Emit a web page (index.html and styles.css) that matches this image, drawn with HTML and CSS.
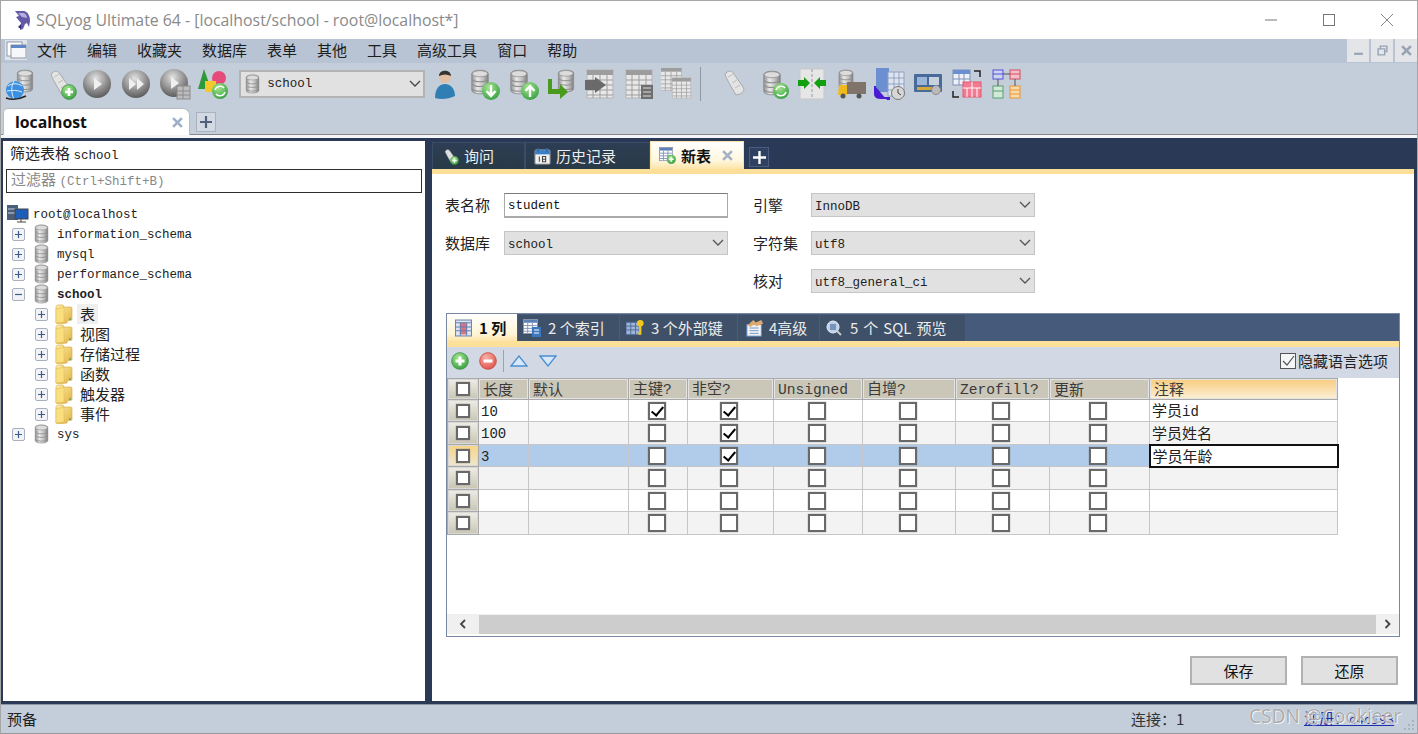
FILE: index.html
```html
<!DOCTYPE html>
<html lang="zh">
<head>
<meta charset="utf-8">
<title>SQLyog</title>
<link rel="stylesheet" href="styles.css">
</head>
<body>
<svg class="defs" aria-hidden="true">
  <defs>
    <linearGradient id="gcyl" x1="0" x2="1" y1="0" y2="0"><stop offset="0" stop-color="#8f8f8f"/><stop offset=".35" stop-color="#e9e9e9"/><stop offset=".7" stop-color="#bdbdbd"/><stop offset="1" stop-color="#7d7d7d"/></linearGradient>
    <radialGradient id="gball" cx=".45" cy=".3" r=".8"><stop offset="0" stop-color="#e2e2e2"/><stop offset=".55" stop-color="#8c8c8c"/><stop offset="1" stop-color="#4a4a4a"/></radialGradient>
    <linearGradient id="gfold" x1="0" x2="1" y1="0" y2="1"><stop offset="0" stop-color="#fbeea8"/><stop offset="1" stop-color="#e2b23f"/></linearGradient>
    <radialGradient id="ggreen" cx=".4" cy=".3" r=".8"><stop offset="0" stop-color="#a5e58f"/><stop offset="1" stop-color="#2e9a3a"/></radialGradient>
    <radialGradient id="gred" cx=".4" cy=".3" r=".8"><stop offset="0" stop-color="#f9b2a8"/><stop offset="1" stop-color="#dd4a42"/></radialGradient>
    <symbol id="db" viewBox="0 0 16 22"><path d="M1 4c0-4 14-4 14 0v14c0 4-14 4-14 0z" fill="url(#gcyl)" stroke="#8a8a8a" stroke-width=".7"/><ellipse cx="8" cy="4" rx="6.5" ry="2.6" fill="#dcdcdc" stroke="#8a8a8a" stroke-width=".6"/><path d="M1.5 9c2 2.4 11 2.4 13 0M1.5 13c2 2.4 11 2.4 13 0M1.5 17c2 2.4 11 2.4 13 0" fill="none" stroke="#8d8d8d" stroke-width=".9"/></symbol>
    <symbol id="gplus" viewBox="0 0 14 14"><circle cx="7" cy="7" r="6.5" fill="url(#ggreen)" stroke="#3c8f44" stroke-width=".6"/><path d="M7 3.5v7M3.5 7h7" stroke="#fff" stroke-width="2.4"/></symbol>
    <symbol id="scroll" viewBox="0 0 32 32"><path d="M7 5c3-3 6-2 8 1l9 13c2 3 0 6-3 7l-4 1c-2-4-5-8-7-12L7 9c-1-1-1-3 0-4z" fill="#e4e4e4" stroke="#a9a9a9"/><path d="M9 9c2-1 4-2 5-3M13 15l5-3M16 20l5-3" stroke="#bdbdbd" fill="none"/></symbol>
    <symbol id="tablegray" viewBox="0 0 32 32"><rect x="3" y="2" width="26" height="28" fill="#e8e8e8" stroke="#b5b5b5"/><rect x="3" y="2" width="26" height="5" fill="#9d9d9d"/><path d="M3 12h26M3 17h26M3 22h26M3 27h26M9 7v23M16 7v23M23 7v23" stroke="#9d9d9d"/></symbol>
    <symbol id="sqgrid" viewBox="0 0 16 16"><rect x=".5" y=".5" width="15" height="15" fill="#fff" stroke="#8b96a8"/><rect x="1" y="1" width="14" height="3" fill="#5f7fb8"/><path d="M1 7h14M1 10h14M1 13h14M5 4v11M10 4v11" stroke="#7f93b3"/></symbol>
    <symbol id="fold" viewBox="0 0 18 20"><path d="M1 3c0-1 1-2 2-2h5l1 2h7c1 0 1 1 1 2v11l-5 1v2l-9 1-2-1z" fill="url(#gfold)" stroke="#d1a93f" stroke-width=".6"/><path d="M1 5l8-2v15l-8 1z" fill="#fadf7f" stroke="#dcb54f" stroke-width=".5"/><rect x="14" y="14" width="2" height="2" fill="#7faa6a"/></symbol>
    <symbol id="p" viewBox="0 0 13 13"><rect x=".5" y=".5" width="12" height="12" rx="1.5" fill="#f1f3f7" stroke="#a9b0bd"/><path d="M3 6.5h7M6.5 3v7" stroke="#3f5b8c" stroke-width="1.2"/></symbol>
    <symbol id="mn" viewBox="0 0 13 13"><rect x=".5" y=".5" width="12" height="12" rx="1.5" fill="#f1f3f7" stroke="#a9b0bd"/><path d="M3 6.5h7" stroke="#3f5b8c" stroke-width="1.2"/></symbol>
  </defs>
</svg>

<div class="window">
  <header class="titlebar">
    <svg class="logo" viewBox="0 0 18 20"><path d="M2 1l9 0c4 1 6 5 6 10l-1 6-2-4-2 1-2 5-3 1 1-7-5-6 3-1z" fill="#6459a6"/><path d="M5 3h6c2 1 3 3 3 5l-5-1z" fill="#b3aee0"/><path d="M5 17l3-3 0 5z" fill="#2d2a78"/></svg>
    <span class="title">SQLyog Ultimate 64 - [localhost/school - root@localhost*]</span>
    <div class="winbtns">
      <svg viewBox="0 0 12 12"><path d="M0 6h12" stroke="#777"/></svg>
      <svg viewBox="0 0 12 12"><rect x=".5" y=".5" width="11" height="11" fill="none" stroke="#777"/></svg>
      <svg viewBox="0 0 12 12"><path d="M0 0l12 12M12 0L0 12" stroke="#777" stroke-width=".9"/></svg>
    </div>
  </header>

  <nav class="menubar">
    <svg class="mdi" viewBox="0 0 22 20"><rect x="0" y="0" width="22" height="20" fill="#dfe3ea"/><rect x="2" y="2" width="15" height="14" fill="#fff" stroke="#8d97a8"/><rect x="6" y="5" width="15" height="13" fill="#f6f7f9" stroke="#8d97a8"/><path d="M6 5h15v3H6z" fill="#5f86c5"/></svg>
    <span class="mi">文件</span><span class="mi">编辑</span><span class="mi">收藏夹</span><span class="mi">数据库</span><span class="mi">表单</span><span class="mi">其他</span><span class="mi">工具</span><span class="mi">高级工具</span><span class="mi">窗口</span><span class="mi">帮助</span>
    <div class="mdibtns">
      <span class="mdib"><svg viewBox="0 0 10 10"><path d="M1 8h8" stroke="#98a3b3" stroke-width="2"/></svg></span>
      <span class="mdib"><svg viewBox="0 0 10 10"><path d="M3 3V1h6v5H7M1 3.5h6V9H1z" fill="none" stroke="#98a3b3" stroke-width="1.3"/></svg></span>
      <span class="mdib"><svg viewBox="0 0 10 10"><path d="M1 1l8 8M9 1l-8 8" stroke="#98a3b3" stroke-width="2.4"/></svg></span>
    </div>
  </nav>

  <div class="toolbar">
    <svg class="ti" viewBox="0 0 32 32"><use href="#db" x="12" y="1" width="18" height="24"/><circle cx="11" cy="22" r="9" fill="#3c8fe0"/><path d="M4 18c4-3 10-3 14 0M3 23c5-1 10-1 15 1M10 13c-3 5-3 12 0 18" stroke="#dff0ff" fill="none"/><path d="M2 30c6 2 14 1 20-2" stroke="#222" stroke-width="1.4" fill="none"/></svg>
    <svg class="ti ti-second" viewBox="0 0 32 32"><use href="#scroll"/><use href="#gplus" x="16" y="16" width="16" height="16"/></svg>
    <svg class="ti" viewBox="0 0 32 32"><circle cx="16" cy="16" r="14" fill="url(#gball)"/><path d="M13 10l8 6-8 6z" fill="#f0f0f0"/></svg>
    <svg class="ti" viewBox="0 0 32 32"><circle cx="16" cy="16" r="14" fill="url(#gball)"/><path d="M9 10l7 6-7 6zM17 10l7 6-7 6z" fill="#f0f0f0"/></svg>
    <svg class="ti" viewBox="0 0 32 32"><circle cx="15" cy="15" r="14" fill="url(#gball)"/><path d="M12 9l8 6-8 6z" fill="#f0f0f0"/><rect x="18" y="18" width="13" height="13" fill="#bdbdbd" stroke="#8a8a8a"/><path d="M18 23h13M18 27h13M24 18v13" stroke="#8a8a8a"/></svg>
    <svg class="ti" viewBox="0 0 32 32"><path d="M7 1l7 20H1z" fill="#2e9a3a"/><circle cx="22" cy="10" r="7" fill="#e64a7a"/><rect x="8" y="13" width="11" height="11" fill="#f4c82d"/><circle cx="23" cy="23" r="8" fill="url(#ggreen)"/><path d="M18 22c1-4 7-5 9-2M28 24c-1 4-7 5-9 2" stroke="#fff" stroke-width="1.5" fill="none"/></svg>
    <div class="combo combo-db"><svg class="cdb" viewBox="0 0 16 22"><use href="#db"/></svg><span class="m">school</span><svg class="chev" viewBox="0 0 12 8"><path d="M1 1l5 5 5-5" fill="none" stroke="#444" stroke-width="1.3"/></svg></div>
    <svg class="ti" viewBox="0 0 32 32"><circle cx="16" cy="9" r="6" fill="#e2bfa2"/><path d="M10 8c0-7 12-7 12 0-4-2-8-2-12 0z" fill="#333"/><path d="M6 30c0-10 5-14 10-14s10 4 10 12c-6 3-14 4-20 2z" fill="#2f7fb5"/></svg>
    <svg class="ti" viewBox="0 0 32 32"><use href="#db" x="2" y="1" width="20" height="26"/><circle cx="23" cy="23" r="9" fill="url(#ggreen)"/><path d="M23 17v10M18.5 23l4.5 5 4.5-5" stroke="#fff" stroke-width="2.4" fill="none"/></svg>
    <svg class="ti" viewBox="0 0 32 32"><use href="#db" x="2" y="1" width="20" height="26"/><circle cx="23" cy="23" r="9" fill="url(#ggreen)"/><path d="M23 29V19M18.5 23l4.5-5 4.5 5" stroke="#fff" stroke-width="2.4" fill="none"/></svg>
    <svg class="ti" viewBox="0 0 32 32"><use href="#db" x="12" y="1" width="18" height="24"/><path d="M3 11h4v10h8v-5l8 8-8 7v-5H3z" fill="#4a9a1e"/></svg>
    <svg class="ti" viewBox="0 0 32 32"><use href="#tablegray"/><path d="M1 12h10v-3l11 8-11 8v-3H1z" fill="#6a6a6a"/></svg>
    <svg class="ti" viewBox="0 0 32 32"><use href="#tablegray"/><rect x="18" y="17" width="12" height="14" fill="#6e6e6e"/><path d="M20 20h8M20 24h8M20 28h8" stroke="#ddd"/></svg>
    <svg class="ti" viewBox="0 0 32 32"><use href="#tablegray" x="-3" y="-2" width="26" height="26"/><use href="#tablegray" x="9" y="8" width="23" height="24"/></svg>
    <span class="tsep"></span>
    <svg class="ti" viewBox="0 0 32 32"><use href="#scroll"/></svg>
    <svg class="ti" viewBox="0 0 32 32"><use href="#db" x="4" y="2" width="20" height="26"/><circle cx="23" cy="23" r="8" fill="url(#ggreen)"/><path d="M18 22c1-4 7-5 9-2M28 24c-1 4-7 5-9 2" stroke="#fff" stroke-width="1.5" fill="none"/></svg>
    <svg class="ti" viewBox="0 0 32 32"><rect x="4" y="1" width="24" height="30" fill="#e6e6e6" stroke="#c7c7c7"/><path d="M16 1v30" stroke="#999" stroke-dasharray="3 2"/><path d="M2 12h6V9l6 6-6 6v-3H2zM30 12h-6V9l-6 6 6 6v-3h6z" fill="#12a012"/></svg>
    <svg class="ti" viewBox="0 0 32 32"><use href="#db" x="2" y="1" width="18" height="22"/><rect x="12" y="14" width="19" height="12" fill="#80736a"/><path d="M4 17h8v10H3z" fill="#f0b91e"/><circle cx="8" cy="28" r="2.5" fill="#555"/><circle cx="24" cy="28" r="2.5" fill="#555"/></svg>
    <svg class="ti" viewBox="0 0 32 32"><rect x="2" y="0" width="13" height="24" fill="#6b8fd0"/><rect x="14" y="4" width="16" height="24" fill="#dfe5ef" stroke="#8fa3c4"/><path d="M14 10h16M14 16h16M14 22h16M20 4v24M25 4v24" stroke="#8fa3c4"/><path d="M1 18v8c0 3 3 4 6 4h8v3l-2-1" fill="#4a1cd2" stroke="#4a1cd2" stroke-width="2"/><circle cx="24" cy="25" r="6.5" fill="#d6d6d6" stroke="#777"/><path d="M24 21v4l3 2" stroke="#444" fill="none"/></svg>
    <svg class="ti" viewBox="0 0 32 32"><rect x="2" y="6" width="28" height="18" rx="1" fill="#4a6a9a"/><rect x="5" y="9" width="10" height="8" fill="#9ab6d8"/><rect x="17" y="9" width="10" height="8" fill="#c7d2de"/><rect x="5" y="19" width="18" height="3" fill="#d3a83c"/><circle cx="24" cy="22" r="4.5" fill="#bbb" stroke="#888"/></svg>
    <svg class="ti" viewBox="0 0 32 32"><rect x="2" y="2" width="17" height="15" fill="#eef2f8" stroke="#7b93b8"/><rect x="2" y="2" width="17" height="4" fill="#6b8fd0"/><path d="M8 6v11M13 6v11M2 11h17" stroke="#7b93b8"/><rect x="12" y="14" width="18" height="15" fill="#f37a90" stroke="#e5566f"/><path d="M21 14v15M12 20h18M16 20v9M26 20v9" stroke="#fff"/><path d="M23 3h6v6M2 23v6h6" fill="none" stroke="#222" stroke-width="1.5"/></svg>
    <svg class="ti" viewBox="0 0 32 32"><rect x="3" y="2" width="10" height="9" fill="#cfd4f0" stroke="#5050d8"/><path d="M3 6h10" stroke="#5050d8"/><rect x="20" y="2" width="10" height="9" fill="#f3c0c8" stroke="#d84a60"/><path d="M20 6h10" stroke="#d84a60"/><rect x="3" y="18" width="10" height="12" fill="#d3e8d6" stroke="#54a06a"/><path d="M3 23h10" stroke="#54a06a"/><rect x="20" y="18" width="10" height="12" fill="#f8d9ac" stroke="#e8952e"/><path d="M20 22h10M20 26h10" stroke="#e8952e"/><path d="M13 6h7M8 11v7M25 11v7" stroke="#555"/></svg>
  </div>

  <div class="conntabs">
    <div class="conntab"><span class="conn-name">localhost</span><svg class="x" viewBox="0 0 10 10"><path d="M1 1l8 8M9 1l-8 8" stroke="#9fb0c8" stroke-width="2.4"/></svg></div>
    <div class="connplus"><svg viewBox="0 0 12 12"><path d="M6 0v12M0 6h12" stroke="#51617b" stroke-width="2.2"/></svg></div>
  </div>
  <div class="gapline"></div>

  <main class="main">
    <aside class="left">
      <div class="flt-label">筛选表格 <span class="m">school</span></div>
      <div class="flt-input">过滤器 <span class="m">(Ctrl+Shift+B)</span></div>
      <ul class="tree">
        <li class="row r0"><svg class="srv" viewBox="0 0 22 18"><rect x="0" y="0" width="11" height="15" fill="#4b5f7b"/><path d="M1 4h9M1 8h9" stroke="#cbd4e0"/><rect x="8" y="4" width="13" height="10" fill="#1d5fb8" stroke="#444"/><path d="M14 14v3M10 17h9" stroke="#444"/></svg><span class="m">root@localhost</span></li>
        <li class="row"><span class="pm"><svg viewBox="0 0 13 13"><use href="#p"/></svg></span><svg class="dbi" viewBox="0 0 16 22"><use href="#db"/></svg><span class="m">information_schema</span></li>
        <li class="row"><span class="pm"><svg viewBox="0 0 13 13"><use href="#p"/></svg></span><svg class="dbi" viewBox="0 0 16 22"><use href="#db"/></svg><span class="m">mysql</span></li>
        <li class="row"><span class="pm"><svg viewBox="0 0 13 13"><use href="#p"/></svg></span><svg class="dbi" viewBox="0 0 16 22"><use href="#db"/></svg><span class="m">performance_schema</span></li>
        <li class="row"><span class="pm"><svg viewBox="0 0 13 13"><use href="#mn"/></svg></span><svg class="dbi" viewBox="0 0 16 22"><use href="#db"/></svg><span class="m b">school</span></li>
        <li class="row sub"><span class="pm"><svg viewBox="0 0 13 13"><use href="#p"/></svg></span><svg class="fo" viewBox="0 0 18 20"><use href="#fold"/></svg><span class="hl">表</span></li>
        <li class="row sub"><span class="pm"><svg viewBox="0 0 13 13"><use href="#p"/></svg></span><svg class="fo" viewBox="0 0 18 20"><use href="#fold"/></svg><span class="cj">视图</span></li>
        <li class="row sub"><span class="pm"><svg viewBox="0 0 13 13"><use href="#p"/></svg></span><svg class="fo" viewBox="0 0 18 20"><use href="#fold"/></svg><span class="cj">存储过程</span></li>
        <li class="row sub"><span class="pm"><svg viewBox="0 0 13 13"><use href="#p"/></svg></span><svg class="fo" viewBox="0 0 18 20"><use href="#fold"/></svg><span class="cj">函数</span></li>
        <li class="row sub"><span class="pm"><svg viewBox="0 0 13 13"><use href="#p"/></svg></span><svg class="fo" viewBox="0 0 18 20"><use href="#fold"/></svg><span class="cj">触发器</span></li>
        <li class="row sub"><span class="pm"><svg viewBox="0 0 13 13"><use href="#p"/></svg></span><svg class="fo" viewBox="0 0 18 20"><use href="#fold"/></svg><span class="cj">事件</span></li>
        <li class="row"><span class="pm"><svg viewBox="0 0 13 13"><use href="#p"/></svg></span><svg class="dbi" viewBox="0 0 16 22"><use href="#db"/></svg><span class="m">sys</span></li>
      </ul>
    </aside>

    <section class="right">
      <div class="qtabs">
        <div class="qtab q1"><svg class="qi" viewBox="0 0 32 32"><use href="#scroll"/><use href="#gplus" x="15" y="15" width="17" height="17"/></svg><span>询问</span></div>
        <div class="qtab q2"><svg class="qi" viewBox="0 0 16 16"><rect x="1" y="2" width="14" height="13" rx="1" fill="#f2f2f2" stroke="#aaa"/><rect x="1" y="2" width="14" height="4" fill="#3a7fc8"/><path d="M4 0v4M12 0v4" stroke="#2e6aa8" stroke-width="1.5"/><path d="M5 8v5M8 8h3v5H8zM8 10.5h3" stroke="#444" fill="none"/></svg><span>历史记录</span></div>
        <div class="qtab active"><svg class="qi" viewBox="0 0 18 18"><use href="#sqgrid" width="15" height="15"/><use href="#gplus" x="8" y="8" width="10" height="10"/></svg><b>新表</b><svg class="x qx" viewBox="0 0 10 10"><path d="M1 1l8 8M9 1l-8 8" stroke="#a5b1c6" stroke-width="2.4"/></svg></div>
        <div class="qplus"><svg viewBox="0 0 12 12"><path d="M6 0v12M0 6h12" stroke="#fff" stroke-width="2.2"/></svg></div>
      </div>
      <div class="yline"></div>
      <div class="body">
        <div class="form">
          <label>表名称</label><div class="inp m">student</div><span></span><label>引擎</label><div class="combo sel"><span class="m">InnoDB</span><svg class="chev" viewBox="0 0 12 8"><path d="M1 1l5 5 5-5" fill="none" stroke="#555" stroke-width="1.3"/></svg></div>
          <label>数据库</label><div class="combo sel"><span class="m">school</span><svg class="chev" viewBox="0 0 12 8"><path d="M1 1l5 5 5-5" fill="none" stroke="#555" stroke-width="1.3"/></svg></div><span></span><label>字符集</label><div class="combo sel"><span class="m">utf8</span><svg class="chev" viewBox="0 0 12 8"><path d="M1 1l5 5 5-5" fill="none" stroke="#555" stroke-width="1.3"/></svg></div>
          <span></span><span></span><span></span><label>核对</label><div class="combo sel"><span class="m">utf8_general_ci</span><svg class="chev" viewBox="0 0 12 8"><path d="M1 1l5 5 5-5" fill="none" stroke="#555" stroke-width="1.3"/></svg></div>
        </div>

        <div class="inner">
          <div class="stabs">
            <div class="stab active s1"><svg class="si" viewBox="0 0 16 16"><rect x=".5" y=".5" width="15" height="15" fill="#dfe6f2" stroke="#6f87ad"/><rect x="5" y="3" width="6" height="11" fill="#e0707a"/><path d="M1 3h14M1 7h14M1 10.5h14M5 3v12M11 3v12" stroke="#5f7faf"/></svg><b>1 列</b></div>
            <div class="stab s2"><svg class="si" viewBox="0 0 18 18"><use href="#sqgrid" width="15" height="15"/><rect x="9" y="8" width="9" height="10" fill="#3c78c0"/><path d="M11 11h5M11 14h5" stroke="#fff"/></svg><span>2 个索引</span></div>
            <div class="stab s3"><svg class="si" viewBox="0 0 20 18"><rect x="0" y="3" width="14" height="13" fill="#9fb4d6" stroke="#4f6b98"/><path d="M0 7h14M0 11h14M5 3v13M10 3v13" stroke="#4f6b98"/><circle cx="15" cy="4" r="3.5" fill="#f2c81e"/><path d="M15 6v9l-2 0" stroke="#f2c81e" stroke-width="2.4" fill="none"/></svg><span>3 个外部键</span></div>
            <div class="stab s4"><svg class="si" viewBox="0 0 20 20"><rect x="1" y="6" width="16" height="13" fill="#f2f2f2" stroke="#5e8fca"/><path d="M4 10h10M4 13h10M4 16h10" stroke="#5e8fca"/><path d="M2 7l6-6 3 3 6-3 2 4-7 3-3-2-4 3z" fill="#e0a96d"/></svg><span>4高级</span></div>
            <div class="stab s5"><svg class="si" viewBox="0 0 16 16"><circle cx="7" cy="7" r="6" fill="#bcd2ec" stroke="#e6edf6"/><path d="M4 5h6M4 7h6M4 9h6" stroke="#34568a"/><path d="M11 11l4 4" stroke="#c8c8c8" stroke-width="2"/></svg><span>5 个 SQL 预览</span></div>
          </div>
          <div class="yline2"></div>
          <div class="subbar">
            <svg class="sb" viewBox="0 0 14 14"><use href="#gplus"/></svg>
            <svg class="sb sb2" viewBox="0 0 14 14"><circle cx="7" cy="7" r="6.5" fill="url(#gred)" stroke="#c9453d" stroke-width=".6"/><path d="M3.5 7h7" stroke="#fff" stroke-width="2.4"/></svg>
            <span class="sbsep"></span>
            <svg class="tri" viewBox="0 0 18 12"><path d="M1 11L9 1l8 10z" fill="#d8e8f8" stroke="#4a8fd0" stroke-width="1.3"/></svg>
            <svg class="tri tri2" viewBox="0 0 18 12"><path d="M1 1l8 10 8-10z" fill="#d8e8f8" stroke="#4a8fd0" stroke-width="1.3"/></svg>
            <div class="hide"><span class="hcb"><svg viewBox="0 0 14 14"><path d="M2 7l4 4 7-9" fill="none" stroke="#555" stroke-width="1.2"/></svg></span>隐藏语言选项</div>
          </div>
          <div class="gridwrap">
            <table class="grid">
              <colgroup><col class="c0"><col class="c1"><col class="c2"><col class="c3"><col class="c4"><col class="c5"><col class="c6"><col class="c7"><col class="c8"><col class="c9"></colgroup>
              <thead><tr>
                <th class="rh"><i class="cb"></i></th><th>长度</th><th>默认</th><th>主键<span class="m">?</span></th><th>非空<span class="m">?</span></th><th><span class="m">Unsigned</span></th><th>自增<span class="m">?</span></th><th><span class="m">Zerofill?</span></th><th>更新</th><th class="sorted">注释</th>
              </tr></thead>
              <tbody>
                <tr><td class="rh"><i class="cb"></i></td><td class="txt"><span class="m">10</span></td><td></td><td class="ck"><i class="cb on"></i></td><td class="ck"><i class="cb on"></i></td><td class="ck"><i class="cb"></i></td><td class="ck"><i class="cb"></i></td><td class="ck"><i class="cb"></i></td><td class="ck"><i class="cb"></i></td><td class="txt">学员<span class="m">id</span></td></tr>
                <tr><td class="rh"><i class="cb"></i></td><td class="txt"><span class="m">100</span></td><td></td><td class="ck"><i class="cb"></i></td><td class="ck"><i class="cb on"></i></td><td class="ck"><i class="cb"></i></td><td class="ck"><i class="cb"></i></td><td class="ck"><i class="cb"></i></td><td class="ck"><i class="cb"></i></td><td class="txt">学员姓名</td></tr>
                <tr class="selrow"><td class="rh"><i class="cb"></i></td><td class="txt"><span class="m">3</span></td><td></td><td class="ck"><i class="cb"></i></td><td class="ck"><i class="cb on"></i></td><td class="ck"><i class="cb"></i></td><td class="ck"><i class="cb"></i></td><td class="ck"><i class="cb"></i></td><td class="ck"><i class="cb"></i></td><td class="txt focus">学员年龄</td></tr>
                <tr><td class="rh"><i class="cb"></i></td><td></td><td></td><td class="ck"><i class="cb"></i></td><td class="ck"><i class="cb"></i></td><td class="ck"><i class="cb"></i></td><td class="ck"><i class="cb"></i></td><td class="ck"><i class="cb"></i></td><td class="ck"><i class="cb"></i></td><td></td></tr>
                <tr><td class="rh"><i class="cb"></i></td><td></td><td></td><td class="ck"><i class="cb"></i></td><td class="ck"><i class="cb"></i></td><td class="ck"><i class="cb"></i></td><td class="ck"><i class="cb"></i></td><td class="ck"><i class="cb"></i></td><td class="ck"><i class="cb"></i></td><td></td></tr>
                <tr><td class="rh"><i class="cb"></i></td><td></td><td></td><td class="ck"><i class="cb"></i></td><td class="ck"><i class="cb"></i></td><td class="ck"><i class="cb"></i></td><td class="ck"><i class="cb"></i></td><td class="ck"><i class="cb"></i></td><td class="ck"><i class="cb"></i></td><td></td></tr>
              </tbody>
            </table>
          </div>
          <div class="hscroll">
            <svg class="arr" viewBox="0 0 8 10"><path d="M6 1L2 5l4 4" fill="none" stroke="#444" stroke-width="1.8"/></svg>
            <div class="thumb"></div>
            <svg class="arr" viewBox="0 0 8 10"><path d="M2 1l4 4-4 4" fill="none" stroke="#444" stroke-width="1.8"/></svg>
          </div>
        </div>

        <div class="actions"><button class="btn">保存</button><button class="btn">还原</button></div>
      </div>
    </section>
  </main>

  <footer class="status">
    <span class="st-ready">预备</span>
    <span class="st-conn">连接：1</span>
    <span class="st-link">注册：<span class="m">c4c193</span></span>
    <svg class="grip" viewBox="0 0 12 12"><path d="M9 1h2v2H9zM5 5h2v2H5zM9 5h2v2H9zM1 9h2v2H1zM5 9h2v2H5zM9 9h2v2H9z" fill="#a8b2c0"/></svg>
    <span class="wm">CSDN @Cookieer</span>
  </footer>
</div>
</body>
</html>
```
FILE: styles.css
```css
* { box-sizing: border-box; }
html, body { margin: 0; padding: 0; height: 100%; overflow: hidden; }
body { font: 15px/20px "Noto Sans CJK SC", "Noto Sans", sans-serif; color: #222; background: #fff; }
.defs { display: block; width: 0; height: 0; overflow: hidden; }
.m { font-family: "Liberation Mono", "Noto Sans CJK SC", monospace; font-size: 12.5px; }
.b { font-weight: 700; }

.window { height: 734px; display: flex; flex-direction: column; border: 1px solid #a6a6a6; border-bottom-color: #9a9a9a; position: relative; }

.titlebar { height: 38px; flex: none; display: flex; align-items: center; background: #fff; padding-left: 12px; }
.logo { width: 18px; height: 20px; }
.title { margin-left: 5px; font: 15.85px/20px "Open Sans", sans-serif; color: #8a8a8a; white-space: nowrap; }
.winbtns { margin-left: auto; display: flex; gap: 46px; padding-right: 24px; }
.winbtns svg { width: 12px; height: 12px; display: block; }

.menubar { height: 24px; flex: none; display: flex; align-items: center; background: #b8c4d4; padding: 0 0 2px 4px; }
.mdi { width: 22px; height: 20px; }
.mi { padding: 0 10px; color: #1d1d1d; }
.mdibtns { margin: 0 0 -2px auto; display: flex; gap: 2px; height: 24px; }
.mdib { width: 22px; height: 23px; background: #e3e5e9; display: flex; align-items: center; justify-content: center; }
.mdib svg { width: 11px; height: 11px; }

.toolbar { height: 42px; flex: none; display: flex; align-items: center; gap: 6.7px; background: #c4ceda; padding: 0 0 0 3px; }
.ti { width: 32px; height: 32px; flex: none; }
.ti-second { margin-left: 2px; margin-right: -2px; }
.combo { display: flex; align-items: center; background: #e1e1e1; border: 2px solid #b3b3b3; }
.combo-db { width: 186px; height: 28px; margin: 0 -2.7px 0 3px; padding: 0 2px 0 4px; flex: none; }
.cdb { width: 15px; height: 20px; margin-right: 7px; }
.chev { width: 12px; height: 8px; margin-left: auto; flex: none; }
.tsep { width: 1px; height: 34px; background: #8f98a5; margin: 0 11.3px 0 0; flex: none; }

.conntabs { height: 30px; flex: none; display: flex; align-items: flex-end; background: #c4ceda; border-bottom: 1px solid #85878b; padding-left: 2px; }
.conntab { width: 187px; height: 27px; background: #fff; border: 1px solid #b7bcc4; border-bottom: 0; border-radius: 5px 7px 0 0; display: flex; align-items: center; padding: 0 6px 0 11px; margin-bottom: -1px; }
.conn-name { font: 700 15.8px/20px "Open Sans", sans-serif; color: #111; }
.x { width: 11px; height: 11px; margin-left: auto; }
.connplus { width: 20px; height: 20px; margin: 0 0 2px 6px; background: #d2d9e3; border: 1px solid #aab2bf; display: flex; align-items: center; justify-content: center; }
.connplus svg { width: 12px; height: 12px; }
.gapline { height: 3px; flex: none; background: #f4f6f9; }

.main { flex: 1; min-height: 0; display: flex; gap: 7px; background: #2a3a56; padding: 3px 3px 3px 2px; }
.left { width: 422px; flex: none; background: #fff; }
.flt-label { height: 28px; padding: 1px 0 0 7px; white-space: nowrap; line-height: 21px; }
.flt-input { height: 24px; margin: 0 3px; border: 1px solid #2d2d2d; color: #888; padding-left: 4px; line-height: 18px; white-space: nowrap; }
.tree { list-style: none; margin: 11px 0 0; padding: 0; }
.row { height: 20px; display: flex; align-items: center; padding-left: 9px; white-space: nowrap; }
.row .m { padding-top: 2px; }
.row.r0 { padding-left: 4px; }
.srv { width: 22px; height: 18px; margin-right: 4px; }
.pm { width: 13px; height: 13px; flex: none; display: block; }
.pm svg { display: block; width: 13px; height: 13px; }
.dbi { width: 15px; height: 20px; margin: 0 8px 0 9px; flex: none; }
.sub { padding-left: 32px; }
.fo { width: 18px; height: 20px; margin: 0 7px 0 7px; flex: none; }
.hl { background: #efefef; padding: 0 3px; margin-left: -3px; }

.right { flex: 1; min-width: 0; display: flex; flex-direction: column; }
.qtabs { height: 28px; flex: none; display: flex; align-items: flex-end; }
.qtab { height: 27px; display: flex; align-items: center; background: linear-gradient(#2d3e55, #283a46); border: 1px solid #3a4c66; border-bottom: 0; color: #eee; flex: none; }
.q1 { width: 93px; padding-left: 9px; }
.q2 { width: 125px; padding-left: 8px; }
.qi { width: 17px; height: 17px; margin-right: 5px; flex: none; }
.qtab.active { width: 94px; height: 28px; padding-left: 8px; color: #111; background: linear-gradient(#fff, #fff6dc 70%, #fde4a6); border: 1px solid #fbe3a8; border-bottom: 0; }
.qx { margin-left: 11px; margin-right: 9px; }
.qplus { width: 20px; height: 20px; margin: 0 0 2px 5px; background: #2f4160; border: 1px solid #4a5d7e; display: flex; align-items: center; justify-content: center; }
.qplus svg { width: 13px; height: 13px; }
.yline { height: 5px; flex: none; background: #fce09a; }

.body { flex: 1; min-height: 0; background: #fff; display: flex; flex-direction: column; padding-top: 19px; }
.form { flex: none; display: grid; grid-template-columns: 59px 224px 25px 58px 224px; grid-auto-rows: 24px; row-gap: 14px; padding-left: 13px; }
.form label { line-height: 23px; white-space: nowrap; }
.inp { border: 2px solid #a9a9a9; border-width: 1px 1px 2px 1px; border-top-color: #7c7c7c; height: 25px; line-height: 24px; padding-left: 3px; color: #111; }
.sel { height: 24px; padding: 0 3px; border-width: 1px; border-color: #c5c5c5; }
.sel .m { padding-top: 3px; }

.inner { height: 324px; flex: none; margin: 20px 14px 0 14px; border: 1px solid #7888a3; display: flex; flex-direction: column; }
.stabs { height: 27px; flex: none; background: #465a7b; display: flex; align-items: flex-end; }
.stab { height: 26px; display: flex; align-items: center; background: #3f5168; color: #ececec; border-right: 1px solid #4a5c78; flex: none; white-space: nowrap; }
.stab.active { height: 27px; color: #111; background: linear-gradient(#fff, #fff4d6 75%, #fde4a6); }
.si { width: 18px; height: 18px; flex: none; }
.s1 { width: 71px; padding-left: 8px; }
.s1 .si { margin-right: 7px; width: 17px; }
.s2 { width: 102px; padding-left: 5px; }
.s2 .si { margin-right: 7px; }
.s3 { width: 118px; padding-left: 6px; }
.s3 .si { margin-right: 6px; width: 19px; }
.s4 { width: 82px; padding-left: 7px; }
.s4 .si { margin-right: 4px; width: 20px; }
.s5 { width: 146px; padding-left: 6px; word-spacing: 1.6px; }
.s5 .si { margin-right: 8px; width: 16px; }
.yline2 { height: 6px; flex: none; background: #fde09a; }
.subbar { height: 31px; flex: none; background: #d2d9e4; display: flex; align-items: center; padding: 0 0 3px 4px; }
.sb { width: 18px; height: 18px; }
.sb2 { margin-left: 10px; }
.sbsep { width: 1px; height: 22px; background: #9aa3b2; margin: 0 6px 0 6px; }
.tri { width: 18px; height: 12px; }
.tri2 { margin-left: 11px; }
.hide { margin-left: auto; margin-right: 11px; display: flex; align-items: center; white-space: nowrap; color: #222; }
.hcb { width: 16px; height: 16px; border: 1px solid #555; background: #f4f6f8; margin-right: 2px; display: block; }
.hcb svg { display: block; width: 14px; height: 14px; }

.gridwrap { flex: 1; min-height: 0; background: #fff; }
.grid { table-layout: fixed; border-collapse: collapse; width: 890px; }
.c0 { width: 31px; } .c1 { width: 50px; } .c2 { width: 100px; } .c3 { width: 59px; } .c4 { width: 86px; }
.c5 { width: 89px; } .c6 { width: 93px; } .c7 { width: 94px; } .c8 { width: 100px; } .c9 { width: 188px; }
.grid th, .grid td { padding: 0; border: 1px solid #c6c6c6; font-weight: 400; white-space: nowrap; overflow: hidden; line-height: 16px; }
.grid th { height: 21px; background: #cbc7b8; box-shadow: inset 0 0 0 1px #e4e4e4; text-align: left; padding-left: 4px; color: #3a3a3a; border-color: #a9a9a9; }
.grid th .m { font-size: 14.6px; }
.grid td .m { font-size: 14px; }
.grid th.sorted { background: linear-gradient(#f8cc80, #fbf1d9); }
.grid tbody tr:nth-child(odd) { height: 22px; }
.grid tbody tr:nth-child(even) { height: 23px; }
.grid tbody tr:nth-child(even) td { background: #f3f3f3; }
.grid td.txt { padding-left: 2px; }
.grid td.ck { text-align: center; padding-right: 3px; line-height: 0; }
.cb { display: inline-block; width: 18px; height: 18px; border: 2px solid #696969; background: #fff; vertical-align: middle; box-shadow: 0 0 1px #777; }
.cb.on::after { content: ""; display: block; width: 5px; height: 10px; border: solid #000; border-width: 0 2.5px 2.5px 0; transform: rotate(40deg); margin: 0 0 0 4px; }
.grid th.rh, .grid td.rh, .grid tbody tr:nth-child(even) td.rh { background: linear-gradient(#eeece5, #c7c4b4); text-align: center; padding: 0; box-shadow: inset 0 0 0 1px #d8d8d8; border-color: #a9a9a9; line-height: 0; }
.rh .cb { width: 14px; height: 14px; }
.grid tr.selrow td { background: #b1cbeb; }
.grid tr.selrow td.rh { background: linear-gradient(#f7d486, #ede7d3); }
.grid tr.selrow td.focus { background: #fff; border: 2px solid #111; }

.hscroll { height: 20px; flex: none; margin: 0 0 2px 0; background: #f0f0f0; display: flex; align-items: center; }
.arr { width: 32px; height: 10px; flex: none; }
.thumb { flex: 1; height: 19px; background: #cdcdcd; }
.hscroll .arr:last-child { width: 23px; }

.actions { margin: 19px 16px 0 0; display: flex; justify-content: flex-end; gap: 14px; flex: none; }
.btn { width: 97px; height: 29px; background: #e1e1e1; border: 2px solid #b1b1b1; font: 15px/20px "Noto Sans CJK SC", sans-serif; color: #111; padding: 0; }

.status { height: 29px; flex: none; display: flex; align-items: center; background: #c4ceda; border-top: 1px solid #8d97a6; padding-left: 6px; position: relative; }
.st-ready { color: #222; }
.st-conn { margin-left: 1094px; color: #333; width: 173px; white-space: nowrap; }
.st-link { color: #1a2fa8; text-decoration: underline; white-space: nowrap; }
.grip { width: 12px; height: 12px; position: absolute; right: 2px; bottom: 2px; }
.wm { position: absolute; left: 1248px; top: -2px; font: 19px/26px "Noto Sans", sans-serif; color: rgba(150,150,150,.8); text-shadow: 0 0 1px #fff, 1px 1px 0 rgba(255,255,255,.7); white-space: nowrap; }
```
